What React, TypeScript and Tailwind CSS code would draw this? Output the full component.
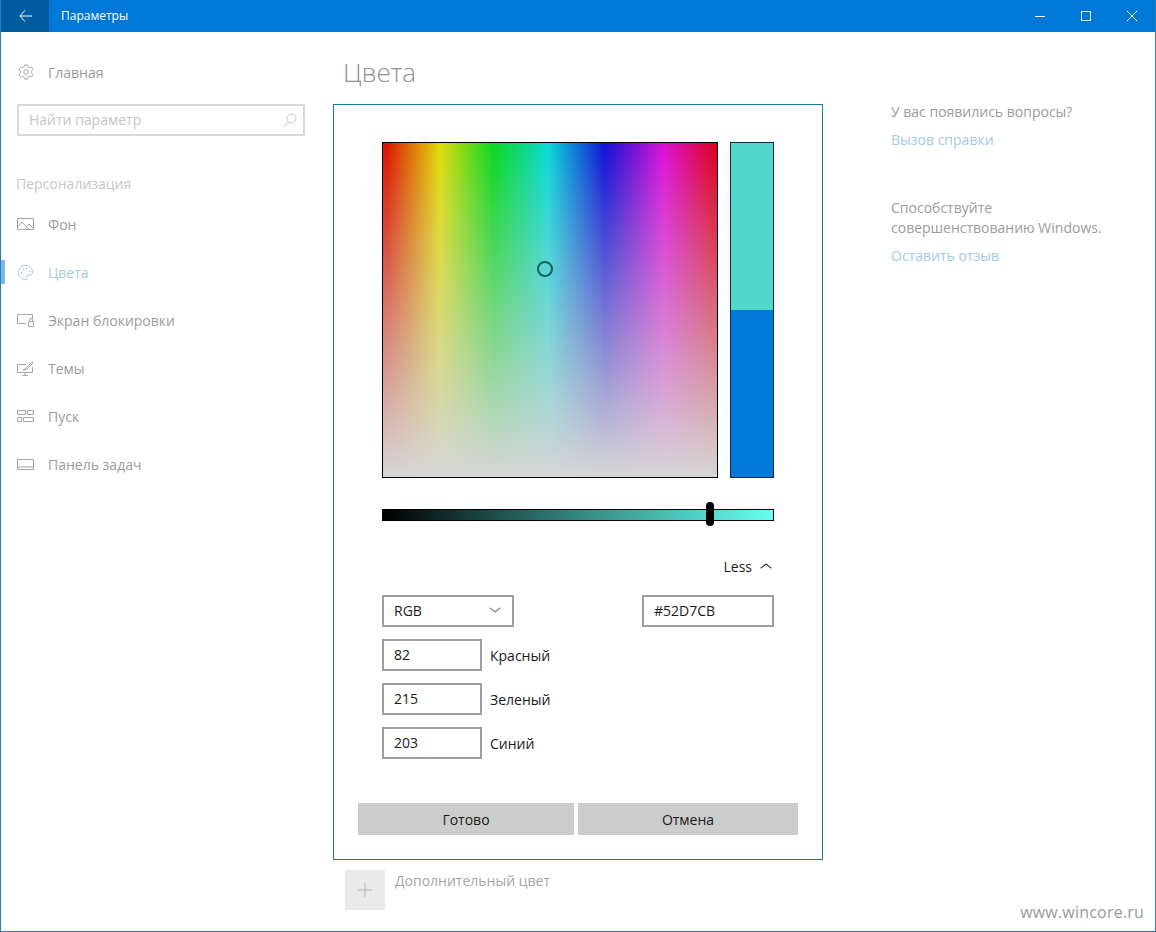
import React from 'react';
import { ChevronDown, ChevronUp, Palette, Plus, Settings } from 'lucide-react';

const font = "font-['Open_Sans','Noto_Sans',sans-serif]";

function ImageIcon() {
  return (
    <svg width="17" height="12" viewBox="0 0 17 12" fill="none" stroke="#a6a6a6" strokeWidth="1">
      <path d="M.5.5h16v11H.5z" />
      <path d="M1 9l4-5 7 7.500M10 8l2-2 4 4" />
    </svg>
  );
}

function LockIcon() {
  return (
    <svg width="17" height="13" viewBox="0 0 17 13" fill="none" stroke="#a6a6a6" strokeWidth="1">
      <path d="M9 9.500H.5V.5h15V6" />
      <path d="M11.500 7.500h5v5h-5zM12.500 7.500V6a1.500 1.500 0 0 1 3 0v1.500" />
    </svg>
  );
}

function ThemeIcon() {
  return (
    <svg width="17" height="15" viewBox="0 0 17 15" fill="none" stroke="#a6a6a6" strokeWidth="1">
      <path d="M9 3.500H.5v8h15V6M8 11.500v3M5 14.500h6" />
      <path d="M6 9l2-1 7-7 1 1-7 7-3 0z" />
    </svg>
  );
}

function StartIcon() {
  return (
    <svg width="17" height="12" viewBox="0 0 17 12" fill="none" stroke="#a6a6a6" strokeWidth="1">
      <path d="M.5.500h8v4h-8zM10.500.500h6v4h-6zM.5 7.500h4v4h-4zM6.500 7.500h10v4h-10z" />
    </svg>
  );
}

function TaskbarIcon() {
  return (
    <svg width="17" height="11" viewBox="0 0 17 11" fill="none" stroke="#a6a6a6" strokeWidth="1">
      <path d="M.5.500h16v10H.5zM.5 8h16" />
    </svg>
  );
}

function SearchIcon() {
  return (
    <svg width="14" height="14" viewBox="0 0 14 14" fill="none" stroke="#c4c4c4" strokeWidth="1">
      <circle cx="8.500" cy="5.500" r="4.500" />
      <path d="M5.500 9L1 13.500" />
    </svg>
  );
}

function BackIcon() {
  return (
    <svg width="13" height="12" viewBox="0 0 13 12" fill="none" stroke="#ffffff" strokeWidth="1">
      <path d="M6 .5L.8 6 6 11.500M1 6h12" />
    </svg>
  );
}

function WindowButtons() {
  return (
    <div className="ml-auto flex items-center">
      <div className="w-[46px] flex justify-center">
        <svg width="10" height="10" viewBox="0 0 10 10" fill="none" stroke="#ffffff" strokeWidth="1"><path d="M0 5.500h10" /></svg>
      </div>
      <div className="w-[46px] flex justify-center">
        <svg width="10" height="10" viewBox="0 0 10 10" fill="none" stroke="#ffffff" strokeWidth="1"><path d="M.5.500h9v9h-9z" /></svg>
      </div>
      <div className="w-[46px] flex justify-center">
        <svg width="10" height="10" viewBox="0 0 10 10" fill="none" stroke="#ffffff" strokeWidth="1"><path d="M0 0l10 10M10 0L0 10" /></svg>
      </div>
    </div>
  );
}

const navItems = [
  { label: 'Фон', icon: <ImageIcon /> },
  { label: 'Цвета', icon: <Palette size={17} strokeWidth={1} absoluteStrokeWidth color="#a4cbe6" />, active: true },
  { label: 'Экран блокировки', icon: <LockIcon /> },
  { label: 'Темы', icon: <ThemeIcon /> },
  { label: 'Пуск', icon: <StartIcon /> },
  { label: 'Панель задач', icon: <TaskbarIcon /> },
];

function Sidebar() {
  return (
    <div className="w-[332px] shrink-0 flex flex-col">
      <div className="flex items-center h-6 mt-[28px] pl-4">
        <Settings size={18} strokeWidth={1} absoluteStrokeWidth color="#a6a6a6" />
        <span className="ml-[13px] text-[14px] text-[#9c9c9c]">Главная</span>
      </div>
      <div className="ml-4 mt-[20px] w-[288px] h-8 border-2 border-[#d9d9d9] flex items-center justify-between pl-[10px] pr-[6px]">
        <span className="text-[14px] leading-5 text-[#c4c4c4]">Найти параметр</span>
        <SearchIcon />
      </div>
      <div className="ml-[15px] mt-[37px] h-5 flex items-center text-[14px] text-[#c6c6c6]">Персонализация</div>
      <div className="mt-[19px] flex flex-col gap-6">
        {navItems.map((item) => (
          <div key={item.label} className="relative h-6 flex items-center pl-4">
            {item.active && <div className="absolute left-0 top-0 w-1 h-6 bg-[#7ab8ea]" />}
            <div className="w-[17px] flex justify-center">{item.icon}</div>
            <span className={`ml-[14px] text-[14px] ${item.active ? 'text-[#a4cbe6]' : 'text-[#9c9c9c]'}`}>{item.label}</span>
          </div>
        ))}
      </div>
    </div>
  );
}

function Field({ value, label }: { value: string; label: string }) {
  return (
    <div className="flex items-center h-8">
      <div className="w-[100px] h-8 border-2 border-[#9f9f9f] flex items-center pl-[10px] pb-[2px] text-[14px] text-[#1a1a1a]">{value}</div>
      <span className="ml-2 text-[14px] text-[#1a1a1a]">{label}</span>
    </div>
  );
}

function ColorDialog() {
  return (
    <div className="w-[490px] h-[756px] border border-[#1a78a8] flex flex-col">
      <div className="ml-[48px] mt-[37px] w-[392px]">
        <div className="flex justify-between">
          <div className="relative w-[336px] h-[336px] border border-black bg-[linear-gradient(90deg,#dc1400_0%,#dc1400_1%,#e0dc08_17%,#0ad820_33%,#0ad8d8_49.500%,#1010d4_66.500%,#dc10d8_84%,#dc0018_100%)]">
            <div className="absolute inset-0 bg-[linear-gradient(180deg,rgba(214,214,214,0)_0%,rgba(214,214,214,1)_100%)]" />
            <div className="absolute left-[154px] top-[118px] w-4 h-4 rounded-full border-2 border-[#1c5f62]" />
          </div>
          <div className="w-[44px] h-[336px] border border-[#0b2a4a] flex flex-col">
            <div className="h-[167px] bg-[#52d7cb]" />
            <div className="flex-1 bg-[#0078d7]" />
          </div>
        </div>
        <div className="relative mt-[31px] h-3 border border-black bg-[linear-gradient(90deg,#000000_0%,#2f7a73_45%,#52d7cb_83%,#66fff0_100%)]">
          <div className="absolute left-[323px] top-[-8px] w-2 h-6 rounded-full bg-black" />
        </div>
        <div className="mt-[35px] h-5 flex items-center justify-end text-[14px] text-[#1a1a1a]">
          Less
          <ChevronUp size={16} strokeWidth={1} absoluteStrokeWidth color="#1a1a1a" className="ml-[6px] scale-x-125" />
        </div>
        <div className="mt-[19px] flex justify-between">
          <div className="w-[132px] h-8 border-2 border-[#9f9f9f] flex items-center justify-between pl-[10px] pr-[9px] pb-[2px] text-[14px] text-[#1a1a1a]">
            RGB
            <ChevronDown size={16} strokeWidth={1} absoluteStrokeWidth color="#6a6a6a" className="scale-x-125" />
          </div>
          <div className="w-[132px] h-8 border-2 border-[#9f9f9f] flex items-center pl-[10px] pb-[2px] text-[14px] text-[#1a1a1a]">#52D7CB</div>
        </div>
        <div className="mt-3 flex flex-col gap-3">
          <Field value="82" label="Красный" />
          <Field value="215" label="Зеленый" />
          <Field value="203" label="Синий" />
        </div>
      </div>
      <div className="ml-6 mt-[44px] flex gap-1">
        <button className="w-[216px] h-8 bg-[#cccccc] text-[14px] text-[#1a1a1a]">Готово</button>
        <button className="w-[220px] h-8 bg-[#cccccc] text-[14px] text-[#1a1a1a]">Отмена</button>
      </div>
    </div>
  );
}

function RightColumn() {
  return (
    <div className="ml-[68px] mt-[70px] flex flex-col text-[14px]">
      <div className="h-5 leading-5 text-[#9c9c9c]">У вас появились вопросы?</div>
      <div className="mt-2 h-5 leading-5 text-[#a4cbe6]">Вызов справки</div>
      <div className="mt-[48px] leading-5 text-[#9c9c9c]">
        Способствуйте
        <br />
        совершенствованию Windows.
      </div>
      <div className="mt-2 h-5 leading-5 text-[#a4cbe6]">Оставить отзыв</div>
    </div>
  );
}

export default function App() {
  return (
    <div className={`${font} relative w-[1156px] h-[932px] bg-white border-x border-b border-[#2a7fb0] flex flex-col overflow-hidden`}>
      <div className="h-8 shrink-0 bg-[#0078d7] flex items-center text-white">
        <div className="w-12 h-8 bg-[#005a9e] flex items-center justify-center">
          <BackIcon />
        </div>
        <span className="ml-3 text-[12px]">Параметры</span>
        <WindowButtons />
      </div>
      <div className="flex flex-1">
        <Sidebar />
        <div className="flex flex-col">
          <div className="h-[72px] pl-[10px] pt-2 flex items-center text-[26px] font-light text-[#909090]">Цвета</div>
          <ColorDialog />
          <div className="mt-[10px] ml-3 flex">
            <div className="w-10 h-10 bg-[#eaeaea] flex items-center justify-center">
              <Plus size={22} strokeWidth={1} absoluteStrokeWidth color="#b4b4b4" />
            </div>
            <span className="ml-[10px] text-[14px] text-[#a6a6a6]">Дополнительный цвет</span>
          </div>
        </div>
        <RightColumn />
      </div>
      <div className="absolute right-[11px] bottom-[7px] text-[16px] tracking-[0.2px] text-[#9a9a9a]">www.wincore.ru</div>
    </div>
  );
}
